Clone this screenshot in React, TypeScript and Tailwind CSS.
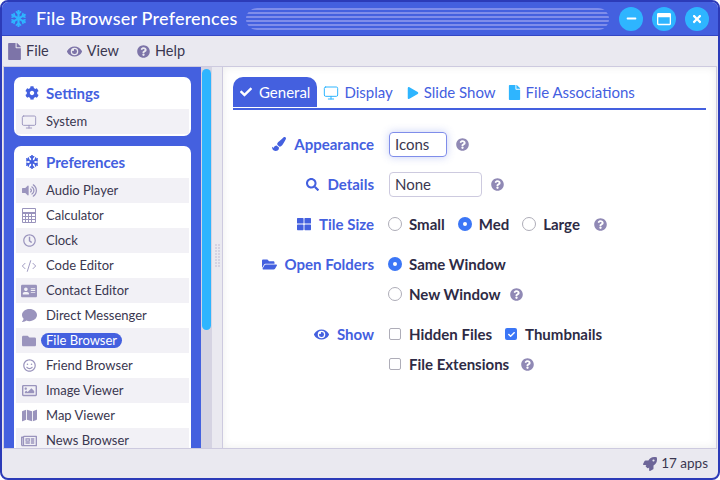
import React from 'react';
import { clsx } from 'clsx';
import {
  FaSnowflake, FaFile, FaEye, FaQuestionCircle, FaCog, FaVolumeUp,
  FaRegClock, FaAddressCard, FaComment, FaFolder, FaRegSmile, FaRegImage, FaMap,
  FaRegNewspaper, FaCheck, FaPlay, FaPaintBrush, FaSearch, FaThLarge, FaFolderOpen, FaRocket,
  FaTimes, FaMinus, FaRegWindowMaximize,
} from 'react-icons/fa';
import { Monitor, CodeXml } from 'lucide-react';

const CalcIcon = () => (
  <svg width="14" height="15" viewBox="0 0 14 15" fill="currentColor">
    <path fillRule="evenodd" d="M1 0h12a1 1 0 0 1 1 1v13a1 1 0 0 1-1 1H1a1 1 0 0 1-1-1V1a1 1 0 0 1 1-1zm0 1v3h12V1zm0 5v2h2V6zm3 0v2h2V6zm3 0v2h2V6zm3 0v2h3V6zM1 9v2h2V9zm3 0v2h2V9zm3 0v2h2V9zm3 0v2h3V9zM1 12v2h2v-2zm3 0v2h2v-2zm3 0v2h2v-2zm3 0v2h3v-2z" />
  </svg>
);

const apps: { label: string; icon: React.ReactNode; selected?: boolean }[] = [
  { label: 'Audio Player', icon: <FaVolumeUp size={15} /> },
  { label: 'Calculator', icon: <CalcIcon /> },
  { label: 'Clock', icon: <FaRegClock size={13} /> },
  { label: 'Code Editor', icon: <CodeXml size={16} strokeWidth={1.4} /> },
  { label: 'Contact Editor', icon: <FaAddressCard size={16} /> },
  { label: 'Direct Messenger', icon: <FaComment size={15} /> },
  { label: 'File Browser', icon: <FaFolder size={14} />, selected: true },
  { label: 'Friend Browser', icon: <FaRegSmile size={13} /> },
  { label: 'Image Viewer', icon: <FaRegImage size={15} /> },
  { label: 'Map Viewer', icon: <FaMap size={15} /> },
  { label: 'News Browser', icon: <FaRegNewspaper size={16} /> },
];

const Row = ({ label, icon, selected, shaded }: { label: string; icon: React.ReactNode; selected?: boolean; shaded: boolean }) => (
  <div className={clsx('flex h-[25px] shrink-0 items-center text-[13px] text-[#3a3750]', shaded && 'bg-[#f2f1f6]')}>
    <span className="flex w-[25px] shrink-0 justify-center pl-[1px] text-[#9a94bd]">{icon}</span>
    <span className={clsx('ml-[5px] leading-[15px]', selected && 'rounded-full bg-[#4460df] px-[5px] text-white -translate-x-[5px]')}>{label}</span>
  </div>
);

const Help = () => <FaQuestionCircle size={13} className="text-[#9089b5]" />;

const Label = ({ icon, text }: { icon: React.ReactNode; text: string }) => (
  <div className="flex h-[30px] w-[141px] shrink-0 items-center justify-end gap-[8px] text-[15px] font-bold text-[#4460df]">
    {icon}
    <span>{text}</span>
  </div>
);

const Radio = ({ on }: { on?: boolean }) => (
  <span className={clsx('flex h-[14px] w-[14px] shrink-0 items-center justify-center rounded-full', on ? 'bg-[#3b76f6]' : 'border border-[#aeadb8] bg-white')}>
    {on && <span className="h-[4px] w-[4px] rounded-full bg-white" />}
  </span>
);

const Check = ({ on }: { on?: boolean }) => (
  <span className={clsx('flex h-[12px] w-[12px] shrink-0 items-center justify-center rounded-[2px]', on ? 'bg-[#3b76f6] text-white' : 'border border-[#aeadb8] bg-white')}>
    {on && <FaCheck size={7} />}
  </span>
);

const Opt = ({ children, text, gap }: { children: React.ReactNode; text: string; gap: string }) => (
  <span className={clsx('flex items-center text-[15px] font-bold text-[#2e2b45]', gap)}>
    {children}
    <span>{text}</span>
  </span>
);

const Tab = ({ icon, text, className }: { icon: React.ReactNode; text: string; className?: string }) => (
  <div className={clsx('flex h-[31px] items-center text-[15px] text-[#4460df]', className)}>
    <span className="text-[#2eb5ff]">{icon}</span>
    <span>{text}</span>
  </div>
);

export default function App() {
  return (
    <div className="flex h-[480px] w-[720px] flex-col overflow-hidden rounded-[8px] border-2 border-[#2c3bb8] bg-[#eae9f0] font-['Lato',sans-serif]">
      <div className="flex h-[34px] shrink-0 items-center border-b border-[#3346c4] bg-[#4460df] pl-[8px] pr-[9px]">
        <FaSnowflake size={17} className="text-[#2eb5ff]" />
        <span className="ml-[9px] text-[18px] font-medium tracking-[0.2px] text-white">File Browser Preferences</span>
        <div className="ml-[8px] flex h-[22px] flex-1 flex-col justify-between overflow-hidden rounded-full">
          {[0, 1, 2, 3, 4, 5].map((i) => <div key={i} className="h-[2px] bg-[#7f8dea]" />)}
        </div>
        <div className="ml-[10px] flex gap-[9px]">
          <span className="flex h-[24px] w-[24px] items-center justify-center rounded-full bg-[#2eb5ff] text-white"><FaMinus size={11} /></span>
          <span className="flex h-[24px] w-[24px] items-center justify-center rounded-full bg-[#2eb5ff] text-white"><FaRegWindowMaximize size={14} /></span>
          <span className="flex h-[24px] w-[24px] items-center justify-center rounded-full bg-[#2eb5ff] text-white"><FaTimes size={12} /></span>
        </div>
      </div>

      <div className="flex h-[30px] shrink-0 items-center gap-[18px] pl-[4px] text-[14.5px] text-[#3a3750]">
        <span className="flex items-center gap-[3px]"><FaFile size={17} className="text-[#7d74a8]" />File</span>
        <span className="flex items-center gap-[5px]"><FaEye size={15} className="text-[#7d74a8]" />View</span>
        <span className="flex items-center gap-[5px]"><FaQuestionCircle size={13} className="text-[#7d74a8]" />Help</span>
      </div>

      <div className="ml-[1px] mr-[1px] flex min-h-0 flex-1 border border-[#cdcadf] bg-white">
        <div className="flex w-[197px] shrink-0 flex-col gap-[10px] overflow-hidden bg-[#4460df] px-[10px] py-[10px]">
          <div className="flex shrink-0 flex-col rounded-[7px] bg-white px-[2px] pb-[2px]">
            <div className="flex h-[32px] items-center gap-[7px] pl-[9px] text-[15px] font-bold text-[#4460df]"><FaCog size={14} />Settings</div>
            <Row label="System" icon={<Monitor size={16} strokeWidth={1.4} />} shaded />
          </div>
          <div className="flex shrink-0 flex-col rounded-t-[7px] bg-white px-[2px]">
            <div className="flex h-[32px] items-center gap-[7px] pl-[9px] text-[15px] font-bold text-[#4460df]"><FaSnowflake size={14} />Preferences</div>
            {apps.map((a, i) => <Row key={a.label} label={a.label} icon={a.icon} selected={a.selected} shaded={i % 2 === 0} />)}
          </div>
        </div>

        <div className="flex w-[11px] shrink-0 justify-center bg-[#d5d3e2] pt-[2px]">
          <div className="h-[261px] w-[9px] rounded-full bg-[#2eb5ff]" />
        </div>

        <div className="grid w-[11px] shrink-0 grid-cols-2 content-center justify-center gap-[1px] border-r border-[#cdcadf] bg-[#eae9f0] px-[3px] pb-[4px]">
          {Array.from({ length: 16 }).map((_, i) => <div key={i} className="h-[2px] w-[2px] bg-[#d5d3e2]" />)}
        </div>

        <div className="flex min-w-0 flex-1 flex-col bg-white px-[10px] pt-[10px] shadow-[inset_0_0_8px_rgba(0,0,0,0.08)]">
          <div className="flex border-b-2 border-[#4460df]">
            <div className="flex h-[30px] items-center gap-[7px] rounded-t-[10px] bg-[#4460df] pl-[7px] pr-[7px] text-[15px] text-white"><FaCheck size={12} />General</div>
            <Tab className="gap-[5px] pl-[6px] pr-[7px]" icon={<Monitor size={16} strokeWidth={1.5} />} text="Display" />
            <Tab className="gap-[5px] pl-[7px] pr-[4px]" icon={<FaPlay size={12} />} text="Slide Show" />
            <Tab className="gap-[4px] pl-[7px] pr-[7px]" icon={<FaFile size={15} />} text="File Associations" />
          </div>

          <div className="flex flex-col pt-[19px]">
            <div className="mb-[10px] flex h-[30px] items-center">
              <Label icon={<FaPaintBrush size={14} />} text="Appearance" />
              <div className="ml-[15px] flex h-[25px] w-[58px] items-center rounded-[4px] border border-[#7f8dea] pl-[5px] text-[15px] text-[#3a3750] shadow-[0_0_8px_rgba(68,96,223,0.3)]">Icons</div>
              <span className="ml-[9px]"><Help /></span>
            </div>
            <div className="mb-[10px] flex h-[30px] items-center">
              <Label icon={<FaSearch size={13} />} text="Details" />
              <div className="ml-[15px] flex h-[25px] w-[93px] items-center rounded-[4px] border border-[#cdcadf] pl-[5px] text-[15px] text-[#3a3750]">None</div>
              <span className="ml-[9px]"><Help /></span>
            </div>
            <div className="mb-[10px] flex h-[30px] items-center">
              <Label icon={<FaThLarge size={14} />} text="Tile Size" />
              <div className="ml-[14px] flex items-center gap-[13px]">
                <Opt text="Small" gap="gap-[7px]"><Radio /></Opt>
                <Opt text="Med" gap="gap-[7px]"><Radio on /></Opt>
                <Opt text="Large" gap="gap-[7px]"><Radio /></Opt>
                <span className="ml-[1px]"><Help /></span>
              </div>
            </div>
            <div className="flex h-[30px] items-center">
              <Label icon={<FaFolderOpen size={15} />} text="Open Folders" />
              <div className="ml-[14px]"><Opt text="Same Window" gap="gap-[7px]"><Radio on /></Opt></div>
            </div>
            <div className="mb-[10px] flex h-[30px] items-center pl-[155px]">
              <Opt text="New Window" gap="gap-[7px]"><Radio /></Opt>
              <span className="ml-[9px]"><Help /></span>
            </div>
            <div className="flex h-[30px] items-center">
              <Label icon={<FaEye size={15} />} text="Show" />
              <div className="ml-[15px] flex items-center gap-[13px]">
                <Opt text="Hidden Files" gap="gap-[8px]"><Check /></Opt>
                <Opt text="Thumbnails" gap="gap-[8px]"><Check on /></Opt>
              </div>
            </div>
            <div className="flex h-[30px] items-center pl-[156px]">
              <Opt text="File Extensions" gap="gap-[8px]"><Check /></Opt>
              <span className="ml-[12px]"><Help /></span>
            </div>
          </div>
        </div>
      </div>

      <div className="flex h-[29px] shrink-0 items-center justify-end gap-[4px] pr-[10px] text-[13.5px] text-[#3a3750]">
        <FaRocket size={14} className="text-[#6d6598]" />17 apps
      </div>
    </div>
  );
}
